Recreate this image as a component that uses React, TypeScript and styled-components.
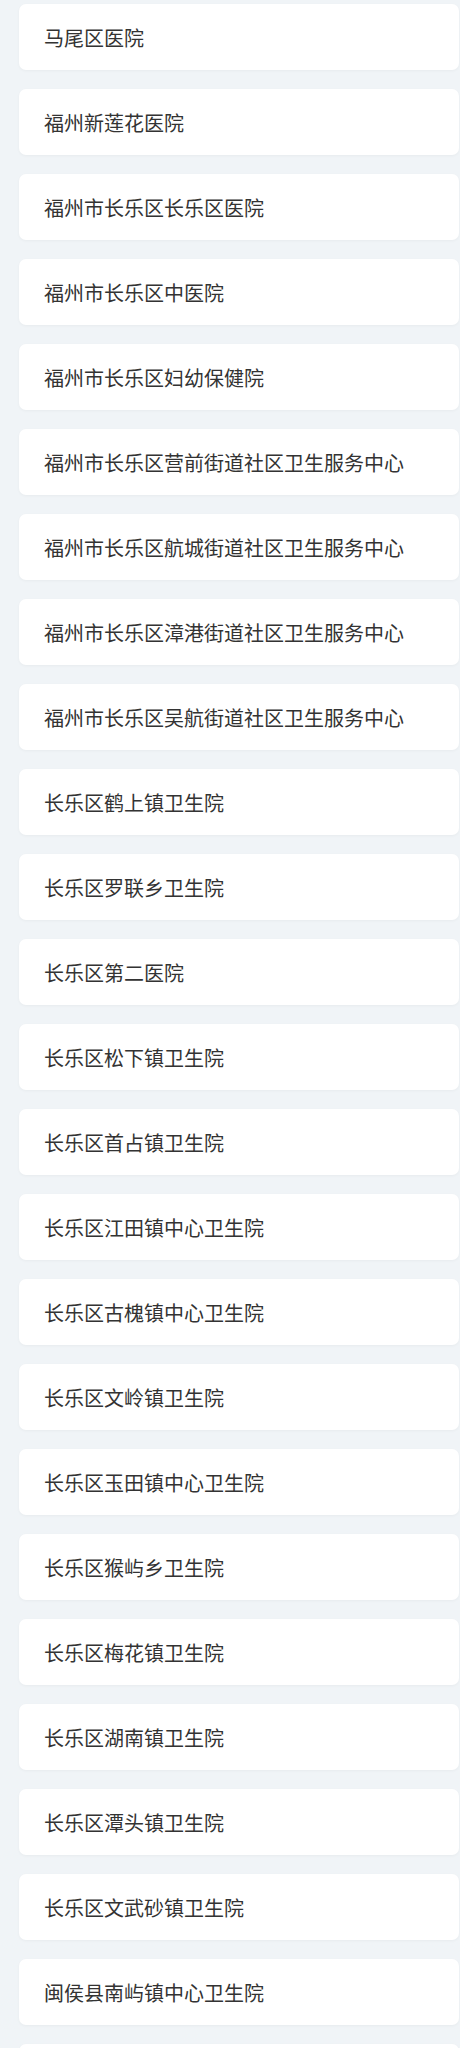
import React from "react";
import styled, { createGlobalStyle } from "styled-components";

const hospitals = [
  "马尾区医院",
  "福州新莲花医院",
  "福州市长乐区长乐区医院",
  "福州市长乐区中医院",
  "福州市长乐区妇幼保健院",
  "福州市长乐区营前街道社区卫生服务中心",
  "福州市长乐区航城街道社区卫生服务中心",
  "福州市长乐区漳港街道社区卫生服务中心",
  "福州市长乐区吴航街道社区卫生服务中心",
  "长乐区鹤上镇卫生院",
  "长乐区罗联乡卫生院",
  "长乐区第二医院",
  "长乐区松下镇卫生院",
  "长乐区首占镇卫生院",
  "长乐区江田镇中心卫生院",
  "长乐区古槐镇中心卫生院",
  "长乐区文岭镇卫生院",
  "长乐区玉田镇中心卫生院",
  "长乐区猴屿乡卫生院",
  "长乐区梅花镇卫生院",
  "长乐区湖南镇卫生院",
  "长乐区潭头镇卫生院",
  "长乐区文武砂镇卫生院",
  "闽侯县南屿镇中心卫生院",
  "闽侯县上街镇卫生院",
];

const GlobalStyle = createGlobalStyle`
  html, body {
    margin: 0;
    padding: 0;
    background: #f0f4f7;
  }
  body {
    font-family: "Noto Sans CJK SC", "Noto Sans", sans-serif;
  }
`;

const List = styled.div`
  display: flex;
  flex-direction: column;
  gap: 19px;
  padding: 4px 1px 0 19px;
`;

const Card = styled.div`
  height: 66px;
  display: flex;
  align-items: center;
  padding-left: 25px;
  background: #ffffff;
  border-radius: 7px;
  box-shadow: 0 1px 3px rgba(0, 0, 0, 0.04);
  font-size: 20px;
  color: #333333;
  white-space: nowrap;
`;

const App: React.FC = () => {
  return (
    <>
      <GlobalStyle />
      <List>
        {hospitals.map((name) => (
          <Card key={name}>{name}</Card>
        ))}
      </List>
    </>
  );
};

export default App;
